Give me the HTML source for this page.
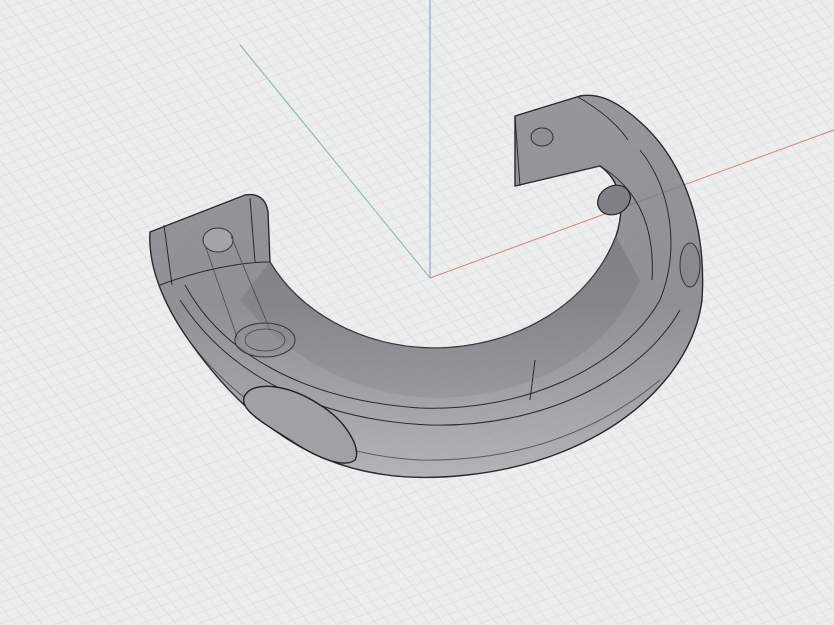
<!DOCTYPE html>
<html><head><meta charset="utf-8"><style>
html,body{margin:0;padding:0;background:#eceeee;overflow:hidden}
svg{display:block}
</style></head><body>
<svg width="834" height="625" viewBox="0 0 834 625" xmlns="http://www.w3.org/2000/svg">
<defs>
<pattern id="g" width="50" height="50" patternUnits="userSpaceOnUse" patternTransform="matrix(1.03,-0.38,0.65,0.8,430,278)">
<rect width="50" height="50" fill="#eceeee"/>
<g stroke="#dcdfe0" stroke-width="0.6" fill="none">
<path d="M10 0V50M20 0V50M30 0V50M40 0V50M0 10H50M0 20H50M0 30H50M0 40H50"/>
</g>
<g stroke="#ccd0d1" stroke-width="0.8" fill="none"><path d="M0 0V50M0 0H50"/></g>
</pattern>
<linearGradient id="body" x1="0" y1="0" x2="0" y2="1">
<stop offset="0" stop-color="#7e7f83"/>
<stop offset="0.55" stop-color="#76777b"/>
<stop offset="1" stop-color="#a2a3a6"/>
</linearGradient>
<linearGradient id="band" x1="0" y1="0" x2="0" y2="1">
<stop offset="0" stop-color="#6d6e72"/>
<stop offset="1" stop-color="#8e8f93"/>
</linearGradient>
</defs>
<rect width="834" height="625" fill="url(#g)"/>
<line x1="240" y1="45" x2="430" y2="278" stroke="#7fbfa8" stroke-width="1"/>
<line x1="430" y1="0" x2="430" y2="278" stroke="#6aa0e0" stroke-width="1"/>
<line x1="430" y1="278" x2="834" y2="130" stroke="#e08080" stroke-width="1"/>
<path d="M150 232 L245 195 Q265 192 268 212 L270 262 C300 312 360 346 430 348 C520 349 592 300 616 236 C626 206 620 180 600 166 L515 186 L515 116 L580 96 Q603 92 628 112 C682 152 707 222 702 300 C694 362 642 420 562 452 C502 476 430 482 380 474 C300 462 240 412 190 342 C160 300 148 262 150 232 Z" fill="url(#body)" fill-opacity="0.78" stroke="#2a2a2c" stroke-width="1.4"/>
<path d="M270 262 C300 312 360 346 430 348 C520 349 592 300 616 236 L640 280 C610 350 540 395 440 398 C360 398 290 360 240 300 Z" fill="url(#band)" fill-opacity="0.5" stroke="none"/>
<g fill="none" stroke="#2a2a2c" stroke-width="1">
<path d="M160 285 C200 270 240 262 270 262"/>
<path d="M185 285 C220 350 300 400 420 408 C520 412 620 370 660 300 C680 250 672 190 640 150"/>
<path d="M180 300 C225 370 310 420 430 425 C540 428 640 380 680 310"/>
<path d="M164 225 L172 285 M250 198 L255 262"/>
<path d="M515 116 L520 186 M578 97 C600 110 618 125 628 140"/>
<path d="M600 166 C640 190 655 230 652 280"/>
<path d="M535 360 L530 400"/>
<path d="M190 342 C250 420 330 455 420 460 C520 462 600 430 660 380" stroke-opacity="0.6"/>
</g>
<ellipse cx="218" cy="240" rx="15" ry="12" fill="#a4a5a8" stroke="#333" stroke-width="1"/>
<path d="M205 245 L238 340 M231 236 L270 330" stroke="#555" stroke-width="1" fill="none"/>
<ellipse cx="265" cy="340" rx="30" ry="17" fill="#8a8b8e" fill-opacity="0.5" stroke="#333" stroke-width="1"/>
<ellipse cx="265" cy="340" rx="20" ry="11" fill="none" stroke="#444" stroke-width="0.8"/>
<path d="M245 395 C255 380 290 385 320 405 C345 420 362 448 355 460 C345 468 320 460 290 440 C258 420 238 408 245 395 Z" fill="#a0a1a4" stroke="#222" stroke-width="1.4"/>
<ellipse cx="542" cy="137" rx="11" ry="9" fill="#8e8f92" stroke="#333" stroke-width="1"/>
<ellipse cx="614" cy="200" rx="17" ry="14" transform="rotate(-30 614 200)" fill="#808184" stroke="#222" stroke-width="1.2"/>
<ellipse cx="690" cy="265" rx="10" ry="22" fill="#858689" fill-opacity="0.7" stroke="#333" stroke-width="1"/>
</svg>
</body></html>
